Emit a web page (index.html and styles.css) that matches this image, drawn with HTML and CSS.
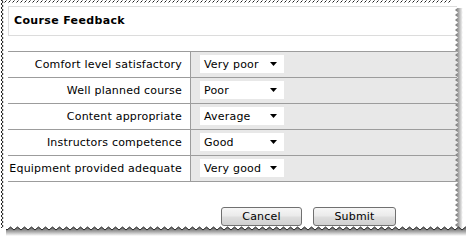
FILE: index.html
```html
<!DOCTYPE html>
<html>
<head>
<meta charset="utf-8">
<title>Course Feedback</title>
<link rel="stylesheet" href="styles.css">
</head>
<body>
<div class="sheet">
  <div class="title-box">Course Feedback</div>

  <div class="rows">
    <div class="label">Comfort level satisfactory</div>
    <div class="value"><div class="select"><span>Very poor</span><svg class="caret" width="7" height="4" viewBox="0 0 7 4"><path d="M0 0H7L3.5 4Z" fill="#000"/></svg></div></div>

    <div class="label">Well planned course</div>
    <div class="value"><div class="select"><span>Poor</span><svg class="caret" width="7" height="4" viewBox="0 0 7 4"><path d="M0 0H7L3.5 4Z" fill="#000"/></svg></div></div>

    <div class="label">Content appropriate</div>
    <div class="value"><div class="select"><span>Average</span><svg class="caret" width="7" height="4" viewBox="0 0 7 4"><path d="M0 0H7L3.5 4Z" fill="#000"/></svg></div></div>

    <div class="label">Instructors competence</div>
    <div class="value"><div class="select"><span>Good</span><svg class="caret" width="7" height="4" viewBox="0 0 7 4"><path d="M0 0H7L3.5 4Z" fill="#000"/></svg></div></div>

    <div class="label">Equipment provided adequate</div>
    <div class="value"><div class="select"><span>Very good</span><svg class="caret" width="7" height="4" viewBox="0 0 7 4"><path d="M0 0H7L3.5 4Z" fill="#000"/></svg></div></div>
  </div>

  <div class="actions">
    <button class="btn btn-cancel">Cancel</button>
    <button class="btn btn-submit">Submit</button>
  </div>

  <svg class="edges" width="466" height="238" viewBox="0 0 466 238">
    <defs>
      <linearGradient id="rs" gradientUnits="userSpaceOnUse" x1="3" y1="0" x2="11" y2="0">
        <stop offset="0" stop-color="#6a6a6a"/>
        <stop offset="0.45" stop-color="#a8a8a8"/>
        <stop offset="1" stop-color="#ffffff"/>
      </linearGradient>
      <linearGradient id="bs" gradientUnits="userSpaceOnUse" x1="0" y1="4" x2="0" y2="12">
        <stop offset="0" stop-color="#6a6a6a"/>
        <stop offset="0.45" stop-color="#a8a8a8"/>
        <stop offset="1" stop-color="#ffffff"/>
      </linearGradient>
      <pattern id="tz" x="0" y="0" width="4" height="3" patternUnits="userSpaceOnUse">
        <path d="M0.5 2.5L2.5 0.5" stroke="#000" stroke-width="0.9"/>
      </pattern>
      <pattern id="lz" x="0" y="0" width="5" height="4" patternUnits="userSpaceOnUse">
        <path d="M1 0L3.2 2L1 4" fill="none" stroke="#000" stroke-width="0.9"/>
      </pattern>
      <pattern id="rz" x="452" y="0" width="14" height="5" patternUnits="userSpaceOnUse">
        <path d="M3 0L6 2.5L3 5H14V0Z" fill="#fff"/>
        <path d="M3 0L6 2.5L3 5H10L11 2.5L10 0Z" fill="url(#rs)"/>
      </pattern>
      <pattern id="bz" x="0" y="224" width="7" height="14" patternUnits="userSpaceOnUse">
        <path d="M0 6L3.5 3L7 6V14H0Z" fill="#fff"/>
        <path d="M0 6L3.5 3L7 6V12H0Z" fill="url(#bs)"/>
        <path d="M0 6L3.5 3L7 6" fill="none" stroke="#111" stroke-width="0.9"/>
      </pattern>
    </defs>
    <rect x="2" y="0" width="450" height="3" fill="url(#tz)"/>
    <rect x="0" y="0" width="5" height="228" fill="url(#lz)"/>
    <rect x="452" y="8" width="14" height="222" fill="url(#rz)"/>
    <rect x="6" y="224" width="460" height="14" fill="url(#bz)"/>
  </svg>
</div>
</body>
</html>
```

FILE: styles.css
```css
html, body {
  margin: 0;
  padding: 0;
  background: #fff;
}

.sheet {
  position: relative;
  width: 466px;
  height: 238px;
  box-sizing: border-box;
  padding: 6px 9px 0 8px;
  font-family: "DejaVu Sans", Verdana, sans-serif;
  font-size: 11px;
  letter-spacing: 0.2px;
  color: #000;
  overflow: hidden;
}

.title-box {
  border: 1px solid #dcdcdc;
  border-right: none;
  height: 30px;
  box-sizing: border-box;
  padding-left: 5px;
  line-height: 27px;
  font-weight: bold;
  letter-spacing: 0.35px;
}

.rows {
  margin-top: 15px;
  display: grid;
  grid-template-columns: 183px 1fr;
  border-top: 1px solid #9c9c9c;
}

.label,
.value {
  height: 26px;
  box-sizing: border-box;
  border-bottom: 1px solid #9c9c9c;
  display: flex;
  align-items: center;
}

.label {
  justify-content: flex-end;
  padding-right: 8px;
  border-right: 1px solid #9c9c9c;
  background: #fff;
  white-space: nowrap;
}

.value {
  background: #e8e8e8;
  padding-left: 9px;
}

.select {
  width: 84px;
  height: 18px;
  box-sizing: border-box;
  background: #fff;
  display: flex;
  align-items: center;
  justify-content: space-between;
  padding: 0 7px 0 4px;
  margin-top: -1px;
}

.caret {
  display: block;
  flex: none;
}

.actions {
  margin-top: 25px;
  display: flex;
  justify-content: flex-end;
  gap: 11px;
  padding-right: 61px;
}

.btn {
  height: 19px;
  box-sizing: border-box;
  border: 1px solid #707070;
  border-radius: 3px;
  background: linear-gradient(#f6f6f6 0%, #ebebeb 45%, #dddddd 55%, #d0d0d0 100%);
  font-family: "DejaVu Sans", Verdana, sans-serif;
  font-size: 11px;
  letter-spacing: 0.2px;
  color: #000;
  padding: 0;
  line-height: 17px;
}

.btn-cancel {
  width: 81px;
}

.btn-submit {
  width: 83px;
}

.edges {
  position: absolute;
  left: 0;
  top: 0;
  pointer-events: none;
}
```
